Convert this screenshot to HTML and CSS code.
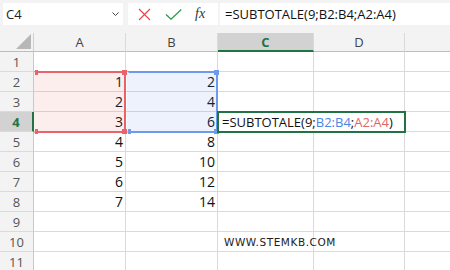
FILE: index.html
```html
<!DOCTYPE html>
<html lang="it">
<head>
  <meta charset="UTF-8" />
  <title>SUBTOTALE</title>
  <link rel="stylesheet" href="styles.css">
</head>
<body>
  <!-- Barra della formula -->
  <div class="toolbar">
    <div class="name-box">
      <span>C4</span>
      <svg class="chevron" width="7" height="4" viewBox="0 0 7 4"><path d="M0.5 0.5 L3.5 3.5 L6.5 0.5" fill="none" stroke="#444" stroke-width="1"/></svg>
    </div>
    <div class="fx-box">
      <svg width="13" height="13" viewBox="0 0 13 13"><path d="M1 1 L12 12 M12 1 L1 12" stroke="#e8464c" stroke-width="1.2" fill="none"/></svg>
      <svg width="17" height="11" viewBox="0 0 17 11"><path d="M1 5.5 L6 10.2 L16.3 0.6" stroke="#2c9e4b" stroke-width="1.3" fill="none"/></svg>
      <span class="fx">fx</span>
    </div>
    <div class="formula">=SUBTOTALE(9;B2:B4;A2:A4)</div>
  </div>

  <!-- Foglio -->
  <div class="sheet">
    <div class="grid">
      <div class="corner"><span class="tri"></span></div>
      <div class="col-head">A</div>
      <div class="col-head">B</div>
      <div class="col-head active">C</div>
      <div class="col-head">D</div>
      <div class="col-head"></div>

      <div class="row-head">1</div><div class="cell"></div><div class="cell"></div><div class="cell"></div><div class="cell"></div><div class="cell"></div>
      <div class="row-head">2</div><div class="cell num">1</div><div class="cell num">2</div><div class="cell"></div><div class="cell"></div><div class="cell"></div>
      <div class="row-head">3</div><div class="cell num">2</div><div class="cell num">4</div><div class="cell"></div><div class="cell"></div><div class="cell"></div>
      <div class="row-head active">4</div><div class="cell num">3</div><div class="cell num">6</div><div class="cell"></div><div class="cell"></div><div class="cell"></div>
      <div class="row-head">5</div><div class="cell num">4</div><div class="cell num">8</div><div class="cell"></div><div class="cell"></div><div class="cell"></div>
      <div class="row-head">6</div><div class="cell num">5</div><div class="cell num">10</div><div class="cell"></div><div class="cell"></div><div class="cell"></div>
      <div class="row-head">7</div><div class="cell num">6</div><div class="cell num">12</div><div class="cell"></div><div class="cell"></div><div class="cell"></div>
      <div class="row-head">8</div><div class="cell num">7</div><div class="cell num">14</div><div class="cell"></div><div class="cell"></div><div class="cell"></div>
      <div class="row-head">9</div><div class="cell"></div><div class="cell"></div><div class="cell"></div><div class="cell"></div><div class="cell"></div>
      <div class="row-head">10</div><div class="cell"></div><div class="cell"></div><div class="cell site">WWW.STEMKB.COM</div><div class="cell"></div><div class="cell"></div>
      <div class="row-head">11</div><div class="cell"></div><div class="cell"></div><div class="cell"></div><div class="cell"></div><div class="cell"></div>
    </div>

    <!-- Intervalli evidenziati -->
    <div class="range red">
      <i class="h tl"></i><i class="h tr"></i><i class="h bl"></i><i class="h br"></i>
    </div>
    <div class="range blue">
      <i class="h tr"></i><i class="h bl"></i><i class="h br"></i>
    </div>
    <!-- Cella in modifica -->
    <div class="editor">=SUBTOTALE(9;<span class="ref-b">B2:B4</span>;<span class="ref-a">A2:A4</span>)</div>
  </div>
</body>
</html>
```

FILE: styles.css
```css
body {
  margin: 0;
  background: #fff;
  font-family: "Open Sans", "Noto Sans", sans-serif;
  width: 450px;
  height: 270px;
  overflow: hidden;
}

/* barra in alto */
.toolbar {
  display: flex;
  height: 33px;
  box-sizing: border-box;
  padding: 3px 0 0 3px;
  background: #f3f3f3;
}

.name-box,
.fx-box,
.formula {
  height: 22px;
  background: #fff;
  box-sizing: border-box;
  display: flex;
  align-items: center;
}

.name-box {
  width: 120px;
  padding: 0 4px 0 3px;
  justify-content: space-between;
  font-size: 13px;
  color: #222;
}

.fx-box {
  width: 90px;
  margin-left: 5px;
  padding-left: 10px;
  gap: 14px;
}

.fx {
  font-family: "Liberation Serif", serif;
  font-style: italic;
  font-size: 14px;
  color: #333;
  margin-left: -1px;
}

.formula {
  flex: 1;
  margin-left: 2px;
  padding-left: 5px;
  font-size: 13px;
  color: #111;
}

/* foglio */
.sheet {
  position: relative;
}

.grid {
  display: grid;
  grid-template-columns: 34px 92px 92px 96px 91px 91px;
  grid-template-rows: 19px repeat(11, 20px);
  width: 496px;
}

.grid > div {
  box-sizing: border-box;
  border-right: 1px solid #dadada;
  border-bottom: 1px solid #dadada;
}

.corner {
  background: #f3f3f3;
  border-bottom-color: #bdbdbd !important;
  border-right-color: #d0d0d0 !important;
  position: relative;
}

.tri {
  position: absolute;
  right: 2px;
  bottom: 2px;
  width: 0;
  height: 0;
  border-left: 15px solid transparent;
  border-bottom: 15px solid #b7b7b7;
}

.col-head {
  background: #f3f3f3;
  border-bottom-color: #bdbdbd !important;
  font-size: 13px;
  color: #444;
  display: flex;
  align-items: center;
  justify-content: center;
}

.col-head.active {
  background: #d2d2d2;
  color: #217346;
  font-weight: bold;
  border-bottom: 2px solid #217346 !important;
}

.row-head {
  background: #f3f3f3;
  border-right-color: #c8c8c8 !important;
  font-size: 13px;
  color: #555;
  display: flex;
  align-items: center;
  justify-content: center;
}

.row-head.active {
  background: #d2d2d2;
  color: #217346;
  font-weight: bold;
  border-right: 2px solid #217346 !important;
}

.cell {
  font-size: 14px;
  color: #111;
  display: flex;
  align-items: center;
}

.num {
  justify-content: flex-end;
  padding-right: 2px;
}

.site {
  font-family: "DejaVu Sans", sans-serif;
  font-size: 10.5px;
  letter-spacing: 0.55px;
  color: #222;
  padding-left: 6px;
  white-space: nowrap;
  overflow: visible;
}

/* intervalli colorati sopra le celle */
.range {
  position: absolute;
  top: 38px;
  height: 62px;
  box-sizing: border-box;
  border: 2px solid;
  border-left-color: transparent !important;
}

.range.red {
  left: 34px;
  width: 92px;
  border-color: #e8646a;
  background: rgba(240, 100, 100, 0.11);
}

.range.blue {
  left: 127px;
  width: 91px;
  border-color: #6d9bea;
  background: rgba(90, 140, 230, 0.11);
}

.h {
  position: absolute;
  width: 5px;
  height: 5px;
}

.red .h { background: #e8646a; }
.blue .h { background: #6d9bea; }

.tl { left: -1px; top: -3px; width: 3px; }
.tr { right: -3px; top: -3px; }
.bl { left: -1px; bottom: -3px; width: 3px; }
.br { right: -3px; bottom: -3px; }

.editor {
  position: absolute;
  left: 217px;
  top: 78px;
  width: 189px;
  height: 22px;
  box-sizing: border-box;
  border: 2px solid #217346;
  background: #fff;
  font-size: 13px;
  color: #111;
  padding-left: 3px;
  display: flex;
  align-items: center;
  white-space: nowrap;
}

.ref-b { color: #4a86e8; }
.ref-a { color: #e06666; }
```
